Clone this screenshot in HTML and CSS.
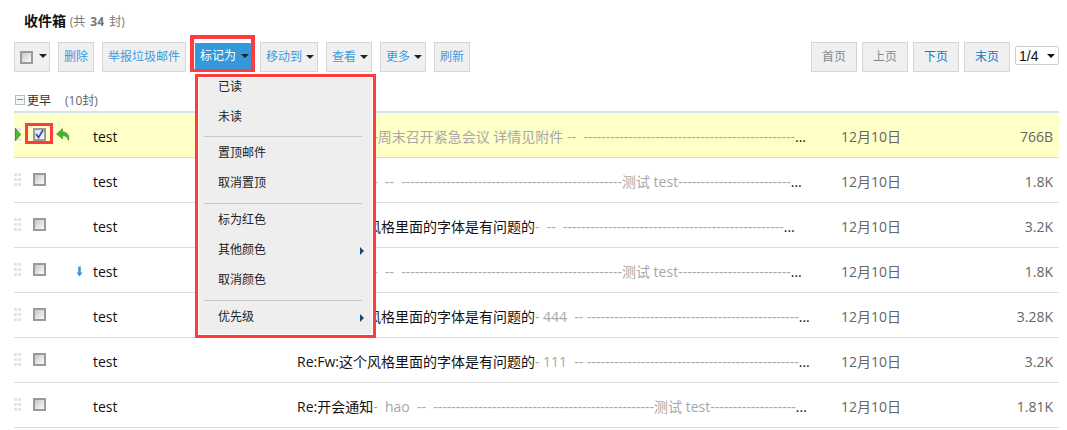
FILE: index.html
```html
<!DOCTYPE html>
<html lang="zh">
<head>
<meta charset="utf-8">
<title>收件箱</title>
<link rel="stylesheet" href="styles.css">
</head>
<body>
<main class="page">
  <h1 class="title">收件箱 <small>(共 <b>34</b> 封)</small></h1>
  <div class="toolbar">
    <div class="tools">
      <div class="btn btn-check"><span class="cb"></span><i class="caret"></i></div>
      <div class="btn">删除</div>
      <div class="btn">举报垃圾邮件</div>
      <div class="btn btn-active">标记为<i class="caret"></i>
        <div class="menu">
          <div class="item">已读</div>
          <div class="item">未读</div>
          <div class="sep"></div>
          <div class="item">置顶邮件</div>
          <div class="item">取消置顶</div>
          <div class="sep"></div>
          <div class="item">标为红色</div>
          <div class="item item-sub">其他颜色</div>
          <div class="item">取消颜色</div>
          <div class="sep"></div>
          <div class="item item-sub">优先级</div>
        </div>
      </div>
      <div class="btn btn-menu">移动到<i class="caret"></i></div>
      <div class="btn btn-menu">查看<i class="caret"></i></div>
      <div class="btn btn-menu">更多<i class="caret"></i></div>
      <div class="btn">刷新</div>
    </div>
    <div class="pager">
      <div class="btn btn-page off">首页</div>
      <div class="btn btn-page off">上页</div>
      <div class="btn btn-page on">下页</div>
      <div class="btn btn-page on">末页</div>
      <div class="select">1/4<i class="caret"></i></div>
    </div>
  </div>
  <div class="group"><span class="minus"></span><span class="group-name">更早</span><span class="group-count">(10封)</span></div>
  <div class="list">
    <div class="row row-selected">
      <span class="grip"><svg class="play" width="7" height="13" viewBox="0 0 7 13"><path d="M0.5 0.5 L5.5 6.5 L0.5 12.5 Z" fill="#5cb531" stroke="#3d9a1e"/></svg></span>
      <span class="cell-check"><span class="cb cb-on"><svg width="9" height="10" viewBox="0 0 9 10"><path d="M1 5 L3.5 8.5 L8 1" fill="none" stroke="#2f4fa8" stroke-width="1.7"/></svg></span></span>
      <span class="flag"><svg width="14" height="13" viewBox="0 0 14 13"><path d="M6.5 0.5 L0.5 6 L6.5 11 V7.8 C9.5 7.6 11.5 9.2 12.5 12.5 C14 7.5 11 3.8 6.5 3.8 Z" fill="#45b035" stroke="#3a9a2a" stroke-width="0.6"/></svg></span>
      <span class="sender">test</span>
      <span class="subject">Re:开会通知<span class="pre">-周末召开紧急会议 详情见附件 --  -----------------------------------------------</span>...</span>
      <span class="date">12月10日</span>
      <span class="size">766B</span>
    </div>
    <div class="row">
      <span class="grip"></span><span class="cell-check"><span class="cb"></span></span><span class="flag"></span>
      <span class="sender">test</span>
      <span class="subject">Re:开会通知<span class="pre">-  --  -------------------------------------------------测试 test-------------------------</span>...</span>
      <span class="date">12月10日</span>
      <span class="size">1.8K</span>
    </div>
    <div class="row">
      <span class="grip"></span><span class="cell-check"><span class="cb"></span></span><span class="flag"></span>
      <span class="sender">test</span>
      <span class="subject">Re:Fw:这个风格里面的字体是有问题的<span class="pre">-  --  -------------------------------------------------</span>...</span>
      <span class="date">12月10日</span>
      <span class="size">3.2K</span>
    </div>
    <div class="row">
      <span class="grip"></span><span class="cell-check"><span class="cb"></span></span>
      <span class="flag flag-low"><svg width="7" height="11" viewBox="0 0 7 11"><path d="M2.2 0.5 H4.8 V6.5 H6.5 L3.5 10.5 L0.5 6.5 H2.2 Z" fill="#4a90cf"/></svg></span>
      <span class="sender">test</span>
      <span class="subject">Re:开会通知<span class="pre">-  --  -------------------------------------------------测试 test-------------------------</span>...</span>
      <span class="date">12月10日</span>
      <span class="size">1.8K</span>
    </div>
    <div class="row">
      <span class="grip"></span><span class="cell-check"><span class="cb"></span></span><span class="flag"></span>
      <span class="sender">test</span>
      <span class="subject">Re:Fw:这个风格里面的字体是有问题的<span class="pre">- 444  -- -----------------------------------------------</span>...</span>
      <span class="date">12月10日</span>
      <span class="size">3.28K</span>
    </div>
    <div class="row">
      <span class="grip"></span><span class="cell-check"><span class="cb"></span></span><span class="flag"></span>
      <span class="sender">test</span>
      <span class="subject">Re:Fw:这个风格里面的字体是有问题的<span class="pre">- 111  -- -----------------------------------------------</span>...</span>
      <span class="date">12月10日</span>
      <span class="size">3.2K</span>
    </div>
    <div class="row">
      <span class="grip"></span><span class="cell-check"><span class="cb"></span></span><span class="flag"></span>
      <span class="sender">test</span>
      <span class="subject">Re:开会通知<span class="pre">-  hao  --  -------------------------------------------------测试 test-------------------</span>...</span>
      <span class="date">12月10日</span>
      <span class="size">1.81K</span>
    </div>
  </div>
</main>
</body>
</html>
```
FILE: styles.css
```css
* { box-sizing: border-box; }
html, body { margin: 0; padding: 0; background: #fff; }
body {
  font-family: "Open Sans", "Noto Sans CJK SC", sans-serif;
  font-size: 12px;
  color: #333;
  overflow: hidden;
  height: 430px;
}
.page { width: 1059px; padding-left: 14px; }

.title {
  margin: 0;
  height: 42px;
  padding: 11px 0 0 10px;
  font-size: 14px;
  line-height: 20px;
  font-weight: 700;
  color: #111;
}
.title small { font-size: 12px; font-weight: 400; color: #777; word-spacing: 2px; }
.title small b { font-weight: 700; }

.toolbar { display: flex; justify-content: space-between; height: 30px; }
.tools { display: flex; gap: 8px; }
.pager { display: flex; gap: 5px; }

.btn {
  position: relative;
  display: flex;
  align-items: center;
  justify-content: center;
  height: 30px;
  padding: 0 5px;
  background: #f0f0f0;
  border: 1px solid #d6d6d6;
  color: #3d9ade;
  line-height: 28px;
  white-space: nowrap;
}
.caret {
  display: inline-block;
  flex: none;
  width: 0;
  height: 0;
  margin-left: 4px;
  border-style: solid;
  border-width: 4px 4px 0;
  border-color: #222 transparent transparent;
}
.btn-menu { padding: 0 3px 0 5px; }
.btn-check { width: 36px; padding: 0 0 0 5px; justify-content: flex-start; }
.btn-check .caret { margin-left: 6px; margin-top: -3px; }
.btn-check .cb { flex: none; margin: 0; }
.btn-active {
  margin: 0 1px;
  width: 56px;
  height: 26px;
  top: 1px;
  justify-content: flex-start;
  background: #3498db;
  border: 0;
  color: #fff;
}
.btn-active .caret { margin-left: 5px; }
.btn-active::before {
  content: "";
  position: absolute;
  left: -5px;
  right: -4px;
  top: -8px;
  bottom: -3px;
  border: solid #ff3b3b;
  border-width: 4px 4px 3px;
  pointer-events: none;
}
.btn-page { width: 46px; padding: 0; }
.off { color: #888; }
.on { color: #0f78c6; }

.select {
  position: relative;
  display: flex;
  align-items: center;
  justify-content: space-between;
  width: 44px;
  height: 19px;
  margin-top: 4px;
  padding: 0 3px;
  border: 1px solid #cfcfcf;
  border-radius: 2px;
  background: #fff;
  color: #111;
  font-family: "Liberation Sans", sans-serif;
  font-size: 14px;
}
.select .caret { margin: 0; border-color: #111 transparent transparent; }

.menu {
  position: absolute;
  left: 0;
  top: 31px;
  z-index: 5;
  width: 181px;
  height: 264px;
  border: 3px solid #ff3b3b;
  background: #eee;
  box-shadow: inset 0 0 0 1px #fff;
  padding: 1px 0;
  color: #222;
  line-height: 16px;
}
.item {
  position: relative;
  height: 30px;
  padding: 8px 0 6px 20px;
  text-align: left;
}
.item:first-child { height: 23px; padding-top: 1px; }
.sep { height: 1px; margin: 6px 11px 0 6px; background: #c8c8c8; }
.sep:nth-child(3) { margin-top: 5px; }
.item-sub::after {
  content: "";
  position: absolute;
  right: 9px;
  top: 13px;
  border-style: solid;
  border-width: 4px 0 4px 4px;
  border-color: transparent transparent transparent #134b7c;
}

.group {
  height: 39px;
  padding: 17px 0 0 1px;
  display: flex;
  align-items: center;
  color: #333;
}
.minus {
  position: relative;
  width: 10px;
  height: 10px;
  margin-right: 2px;
  border: 1px solid #a9c4bd;
  background: #f4f8f7;
}
.minus::after {
  content: "";
  position: absolute;
  left: 1px;
  right: 1px;
  top: 3px;
  height: 1px;
  background: #6f9a8e;
}
.group-count { margin-left: 14px; color: #666; }

.list { border-top: 2px solid #cfe3f3; }
.row {
  display: grid;
  grid-template-columns: 19px 23px 37px 204px 509px 35px 120px 1fr;
  height: 45px;
  padding: 14px 6px 0 0;
  border-bottom: 1px solid #dcdcdc;
  font-size: 14px;
  line-height: 20px;
}
.row-selected { background: #ffffc8; }
.grip {
  position: relative;
  width: 7px;
  height: 14px;
  margin-top: 1px;
}
.grip::before {
  content: "";
  position: absolute;
  inset: 0;
  background-image: linear-gradient(#e4e4e4 3px, transparent 3px);
  background-size: 7px 5px;
  -webkit-mask: linear-gradient(90deg, #000 3px, transparent 3px, transparent 4px, #000 4px);
  mask: linear-gradient(90deg, #000 3px, transparent 3px, transparent 4px, #000 4px);
}
.play { position: absolute; left: 1px; top: 0; }
.cell-check { display: block; }
.cb {
  display: block;
  position: relative;
  width: 13px;
  height: 13px;
  margin-top: 1px;
  border: 2px solid #9a9a9a;
  background: linear-gradient(135deg, #c2c8d0, #fbfbfb);
}
.cb svg { position: absolute; left: 0; top: -1px; }
.cb-on { background: linear-gradient(135deg, #dfe3ea, #f6f6f6); }
.cb-on::after {
  content: "";
  position: absolute;
  left: -10px;
  right: -9px;
  top: -7px;
  bottom: -5px;
  border: 3px solid #ff3b3b;
}
.flag { display: block; }
.flag svg { display: block; margin-top: 1px; }
.flag-low svg { margin: 4px 0 0 20px; }
.sender { color: #111; }
.subject { color: #111; white-space: nowrap; }
.pre { color: #a8a8a8; white-space: pre; }
.date { grid-column: 7; color: #666; }
.size { color: #666; text-align: right; }
```
